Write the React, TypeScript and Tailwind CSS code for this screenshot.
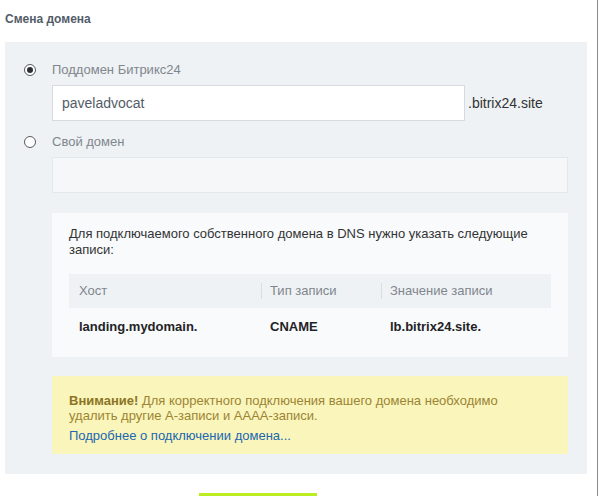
import React from "react";

function Radio({ checked }: { checked?: boolean }) {
  return (
    <span className="flex h-[12px] w-[12px] items-center justify-center rounded-full border border-[#555b61] bg-white">
      {checked && <span className="h-[6px] w-[6px] rounded-full bg-[#2b2f33]" />}
    </span>
  );
}

const records = [{ host: "landing.mydomain.", type: "CNAME", value: "lb.bitrix24.site." }];

export default function App() {
  return (
    <div
      className="relative h-[496px] w-[598px] overflow-hidden border-r border-[#8c8c8c] bg-white text-[13px]"
      style={{ fontFamily: '"Liberation Sans", Arial, sans-serif' }}
    >
      <div className="pl-[5px] pt-[11px] text-[12px] font-bold leading-[16px] text-[#535c69]">
        Смена домена
      </div>

      <div className="ml-[5px] mt-[15px] w-[582px] bg-[#eef2f4] pb-[20px] pr-[19px] pt-[20px]">
        {/* subdomain */}
        <div className="flex items-center leading-[16px]">
          <div className="flex w-[47px] justify-center pl-[2px]">
            <Radio checked />
          </div>
          <span className="text-[#80868e]">Поддомен Битрикс24</span>
        </div>
        <div className="ml-[47px] mt-[7px] flex items-center">
          <div className="flex h-[36px] w-[413px] items-center border border-[#d5dbe0] bg-white px-[9px] text-[14px] text-[#535c69]">
            paveladvocat
          </div>
          <span className="ml-[3px] text-[14px] text-[#333]">.bitrix24.site</span>
        </div>

        {/* own domain */}
        <div className="mt-[13px] flex items-center leading-[16px]">
          <div className="flex w-[47px] justify-center pl-[2px]">
            <Radio />
          </div>
          <span className="text-[#80868e]">Свой домен</span>
        </div>
        <div className="ml-[47px] mt-[7px] h-[36px] w-[516px] border border-[#e3e8eb] bg-[#f5f7f8]" />

        <div className="ml-[47px] mt-[20px] w-[516px] bg-[#f8fafb] px-[17px] pb-[12px] pt-[13px]">
          <p className="leading-[16px] text-[#333]">
            Для подключаемого собственного домена в DNS нужно указать следующие записи:
          </p>
          <div className="mt-[16px]">
            <div className="flex h-[34px] items-center bg-[#eef2f4] text-[#80868e]">
              <div className="w-[192px] pl-[10px]">Хост</div>
              <div className="h-[16px] w-px bg-[#d9dee2]" />
              <div className="w-[119px] pl-[8px]">Тип записи</div>
              <div className="h-[16px] w-px bg-[#d9dee2]" />
              <div className="flex-1 pl-[8px]">Значение записи</div>
            </div>
            {records.map((r) => (
              <div key={r.host} className="flex h-[37px] items-center font-bold text-[#1f2326]">
                <div className="w-[192px] pl-[10px]">{r.host}</div>
                <div className="w-[120px] pl-[9px]">{r.type}</div>
                <div className="flex-1 pl-[9px]">{r.value}</div>
              </div>
            ))}
          </div>
        </div>

        <div className="ml-[47px] mt-[19px] w-[516px] bg-[#f9f5bb] px-[17px] pb-[11px] pt-[17px] leading-[15px] text-[#9c8433]">
          <p>
            <b className="text-[#8c7424]">Внимание!</b> Для корректного подключения вашего домена необходимо
            <br />
            удалить другие A-записи и AAAA-записи.
          </p>
          <a className="mt-[5px] block text-[#2067b0]">Подробнее о подключении домена...</a>
        </div>
      </div>

      <div className="ml-[199px] mt-[19px] h-[30px] w-[118px] bg-[#bbed21]" />
    </div>
  );
}
